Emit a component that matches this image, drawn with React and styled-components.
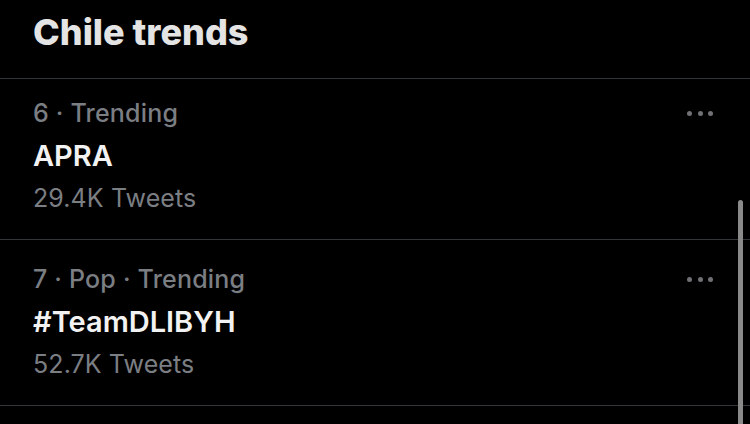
import React from "react";
import styled, { createGlobalStyle } from "styled-components";

const Global = createGlobalStyle`
  html, body { margin: 0; padding: 0; background: #000; }
  body { font-family: Inter, "Noto Sans", "Liberation Sans", sans-serif; -webkit-font-smoothing: antialiased; }
`;

const Screen = styled.div`
  position: relative;
  width: 750px;
  height: 424px;
  overflow: hidden;
  background: #000;
`;

const Header = styled.header`
  box-sizing: border-box;
  height: 79px;
  padding: 14px 33px 0;
  border-bottom: 1px solid #333639;
`;

const Heading = styled.h1`
  margin: 0;
  font-size: 36px;
  line-height: 37px;
  font-weight: 800;
  color: #e4e4e4;
`;

const Row = styled.div`
  display: flex;
  flex-direction: column;
  padding: ${(p) => p.$top}px 37px 26px 33px;
  border-bottom: 1px solid #333639;
`;

const MetaLine = styled.div`
  display: flex;
  align-items: center;
  justify-content: space-between;
  height: 30px;
`;

const Meta = styled.span`
  font-size: 25px;
  line-height: 30px;
  font-weight: 500;
  letter-spacing: 0.2px;
  color: #7b7e83;
`;

const TrendName = styled.div`
  margin-top: 11px;
  font-size: 29px;
  line-height: 34px;
  font-weight: 600;
  color: #f2f2f2;
`;

const Count = styled.div`
  margin-top: 10px;
  font-size: 25px;
  line-height: 30px;
  font-weight: 400;
  letter-spacing: 0.1px;
  color: #7b7e83;
`;

const More = styled.div`
  display: flex;
  gap: 5.5px;
`;

const Dot = styled.span`
  width: 5px;
  height: 5px;
  border-radius: 50%;
  background: #6f7175;
`;

const ScrollThumb = styled.div`
  position: absolute;
  right: 7px;
  top: 200px;
  bottom: -4px;
  width: 5px;
  border-radius: 3px;
  background: #8a8a8a;
`;

const trends = [
  { meta: "6 · Trending", name: "APRA", count: "29.4K Tweets", top: 19 },
  { meta: "7 · Pop · Trending", name: "#TeamDLIBYH", count: "52.7K Tweets", top: 24 },
];

export default function App() {
  return (
    <Screen>
      <Global />
      <Header>
        <Heading>Chile trends</Heading>
      </Header>
      {trends.map((t) => (
        <Row key={t.name} $top={t.top}>
          <MetaLine>
            <Meta>{t.meta}</Meta>
            <More>
              <Dot />
              <Dot />
              <Dot />
            </More>
          </MetaLine>
          <TrendName>{t.name}</TrendName>
          <Count>{t.count}</Count>
        </Row>
      ))}
      <ScrollThumb />
    </Screen>
  );
}
